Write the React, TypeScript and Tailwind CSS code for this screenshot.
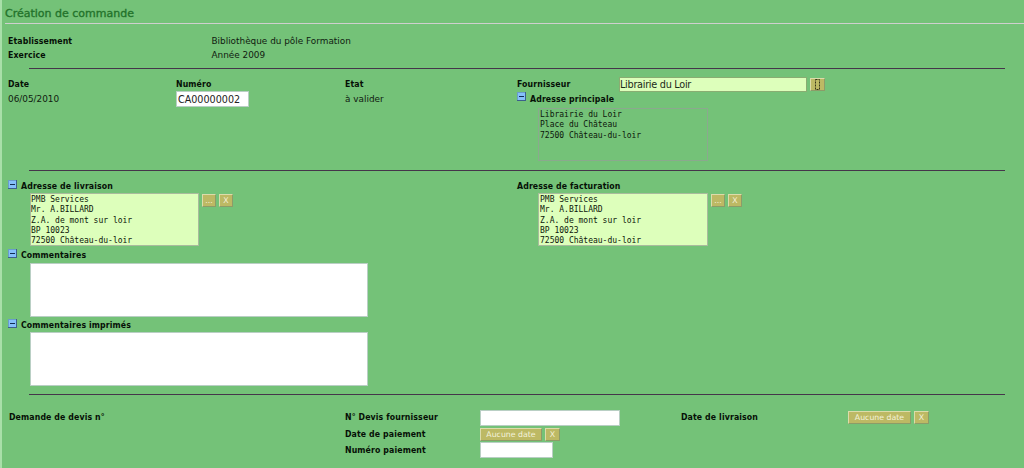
import type { ReactNode } from "react";

function Label({ children, className = "" }: { children: ReactNode; className?: string }) {
  return (
    <div
      className={`font-['DejaVu_Sans_Condensed','DejaVu_Sans',sans-serif] text-[8.7px] leading-[14px] font-bold tracking-[0.12px] whitespace-nowrap text-[#061006] ${className}`}
    >
      {children}
    </div>
  );
}

function Toggle() {
  return (
    <button type="button" aria-label="Replier" className="mr-[3px] block h-[10px] w-[10px] shrink-0">
      <svg viewBox="0 0 10 10" width="10" height="10" className="block" shapeRendering="crispEdges">
        <rect width="9" height="9" fill="#6a9ccb" />
        <rect x="1" y="1" width="7" height="7" fill="#85c0fb" />
        <path d="M0 8H8V0H9V9H0Z" fill="#3c5f8c" />
        <rect x="2" y="4" width="5" height="1" fill="#122c52" />
      </svg>
    </button>
  );
}

function Btn({ children, className = "" }: { children: ReactNode; className?: string }) {
  return (
    <button
      type="button"
      className={`flex h-[13px] shrink-0 items-center justify-center border border-t-[#dcdcaa] border-r-[#8c9c68] border-b-[#8c9c68] border-l-[#dcdcaa] bg-[#bdb964] text-[7.8px] leading-none whitespace-nowrap text-[#f4f3dc] ${className}`}
    >
      {children}
    </button>
  );
}

function Area({ lines, className = "" }: { lines: string[]; className?: string }) {
  return (
    <div
      className={`shrink-0 overflow-hidden border font-['DejaVu_Sans_Mono',monospace] text-[8px] leading-[10.35px] text-[#0c160a] ${className}`}
    >
      {lines.map((l) => (
        <div key={l} className="whitespace-pre">
          {l}
        </div>
      ))}
    </div>
  );
}

function Rule() {
  return <div className="ml-[27px] h-px w-[976px] shrink-0 bg-[#45354a]" />;
}

const supplier = ["Librairie du Loir", "Place du Château", "72500 Château-du-loir"];
const office = ["PMB Services", "Mr. A.BILLARD", "Z.A. de mont sur loir", "BP 10023", "72500 Château-du-loir"];

export default function App() {
  return (
    <div className="flex h-[468px] w-[1024px] flex-col overflow-hidden border-l-2 border-[#a9dfa9] bg-[#74c278] font-['DejaVu_Sans',sans-serif] text-[8.9px] leading-[14px] text-[#102010]">
      <h1 className="ml-[3px] h-[24px] shrink-0 border-b border-[#cfcfcf] pt-[7px] text-[11px] leading-[14px] font-normal text-[#23732b] [-webkit-text-stroke:0.35px_#23732b]">
        Création de commande
      </h1>

      <div className="grid h-[44px] shrink-0 grid-cols-[203.5px_1fr] content-start pt-[10px] pl-[6px]">
        <Label>Etablissement</Label>
        <div>Bibliothèque du pôle Formation</div>
        <Label>Exercice</Label>
        <div>Année 2009</div>
      </div>
      <Rule />

      <div className="flex h-[101px] shrink-0 pt-[8px] pl-[6px]">
        <div className="w-[168px]">
          <Label>Date</Label>
          <div className="pt-px">06/05/2010</div>
        </div>
        <div className="w-[169px]">
          <Label>Numéro</Label>
          <input
            defaultValue="CA00000002"
            className="block h-[16px] w-[73px] border border-[#b9cfc4] bg-white pl-px text-[9.6px] text-[#222]"
          />
        </div>
        <div className="w-[172px]">
          <Label>Etat</Label>
          <div className="pt-px">à valider</div>
        </div>
        <div>
          <div className="flex h-[14px]">
            <Label className="w-[102px]">Fournisseur</Label>
            <input
              defaultValue="Librairie du Loir"
              className="block h-[15px] w-[188px] border border-[#8aad72] bg-[#ddffbb] text-[9.7px] tracking-[-0.28px] text-[#1b2a18]"
            />
            <Btn className="mt-px ml-[3px] w-[15px]">
              <svg viewBox="0 0 6 11" width="6" height="11">
                <rect x="0.5" y="0.5" width="4" height="10" fill="none" stroke="#38361a" strokeDasharray="2 1" />
              </svg>
            </Btn>
          </div>
          <div className="flex h-[17px] pt-px">
            <Toggle />
            <Label>Adresse principale</Label>
          </div>
          <Area lines={supplier} className="ml-[21px] h-[53px] w-[170px] border-[#8ba98e] pt-px pl-px" />
        </div>
      </div>
      <Rule />

      <div className="flex h-[77px] shrink-0 pt-[9px] pl-[6px]">
        <div className="w-[509px]">
          <div className="flex h-[13px]">
            <Toggle />
            <Label className="-mt-px">Adresse de livraison</Label>
          </div>
          <div className="flex pl-[22px]">
            <Area lines={office} className="h-[53px] w-[169px] border-[#a9bb9d] bg-[#ddffbb] pt-px" />
            <Btn className="mt-px ml-[3px] w-[14px]">...</Btn>
            <Btn className="mt-px ml-[3px] w-[14px]">X</Btn>
          </div>
        </div>
        <div>
          <Label className="-mt-px h-[14px]">Adresse de facturation</Label>
          <div className="flex pl-[21px]">
            <Area lines={office} className="h-[53px] w-[170px] border-[#a9bb9d] bg-[#ddffbb] pt-px pl-px" />
            <Btn className="mt-px ml-[3px] w-[14px]">...</Btn>
            <Btn className="mt-px ml-[3px] w-[14px]">X</Btn>
          </div>
        </div>
      </div>

      <div className="h-[69px] shrink-0 pt-px pl-[6px]">
        <div className="flex h-[14px]">
          <Toggle />
          <Label className="-mt-px">Commentaires</Label>
        </div>
        <textarea className="ml-[22px] block h-[54px] w-[338px] resize-none border border-[#b9cfc4] bg-white" />
      </div>
      <div className="h-[77px] shrink-0 pt-[2px] pl-[6px]">
        <div className="flex h-[13px]">
          <Toggle />
          <Label className="-mt-px">Commentaires imprimés</Label>
        </div>
        <textarea className="ml-[22px] block h-[54px] w-[338px] resize-none border border-[#b9cfc4] bg-white" />
      </div>
      <Rule />

      <div className="flex pt-[15px] pl-[7px]">
        <Label className="w-[336px]">Demande de devis n°</Label>
        <div className="w-[135px]">
          <Label className="h-[17px] tracking-[0.2px]">N° Devis fournisseur</Label>
          <Label className="h-[16px]">Date de paiement</Label>
          <Label>Numéro paiement</Label>
        </div>
        <div className="w-[201px]">
          <input className="block h-[16px] w-[140px] border border-[#b9cfc4] bg-white" />
          <div className="flex gap-[3px] pt-[2px]">
            <Btn className="w-[62px]">Aucune date</Btn>
            <Btn className="w-[15px]">X</Btn>
          </div>
          <input className="mt-px block h-[16px] w-[73px] border border-[#b9cfc4] bg-white" />
        </div>
        <Label className="w-[167px]">Date de livraison</Label>
        <div className="flex gap-[3px] pt-px">
          <Btn className="w-[63px]">Aucune date</Btn>
          <Btn className="w-[15px]">X</Btn>
        </div>
      </div>
    </div>
  );
}
